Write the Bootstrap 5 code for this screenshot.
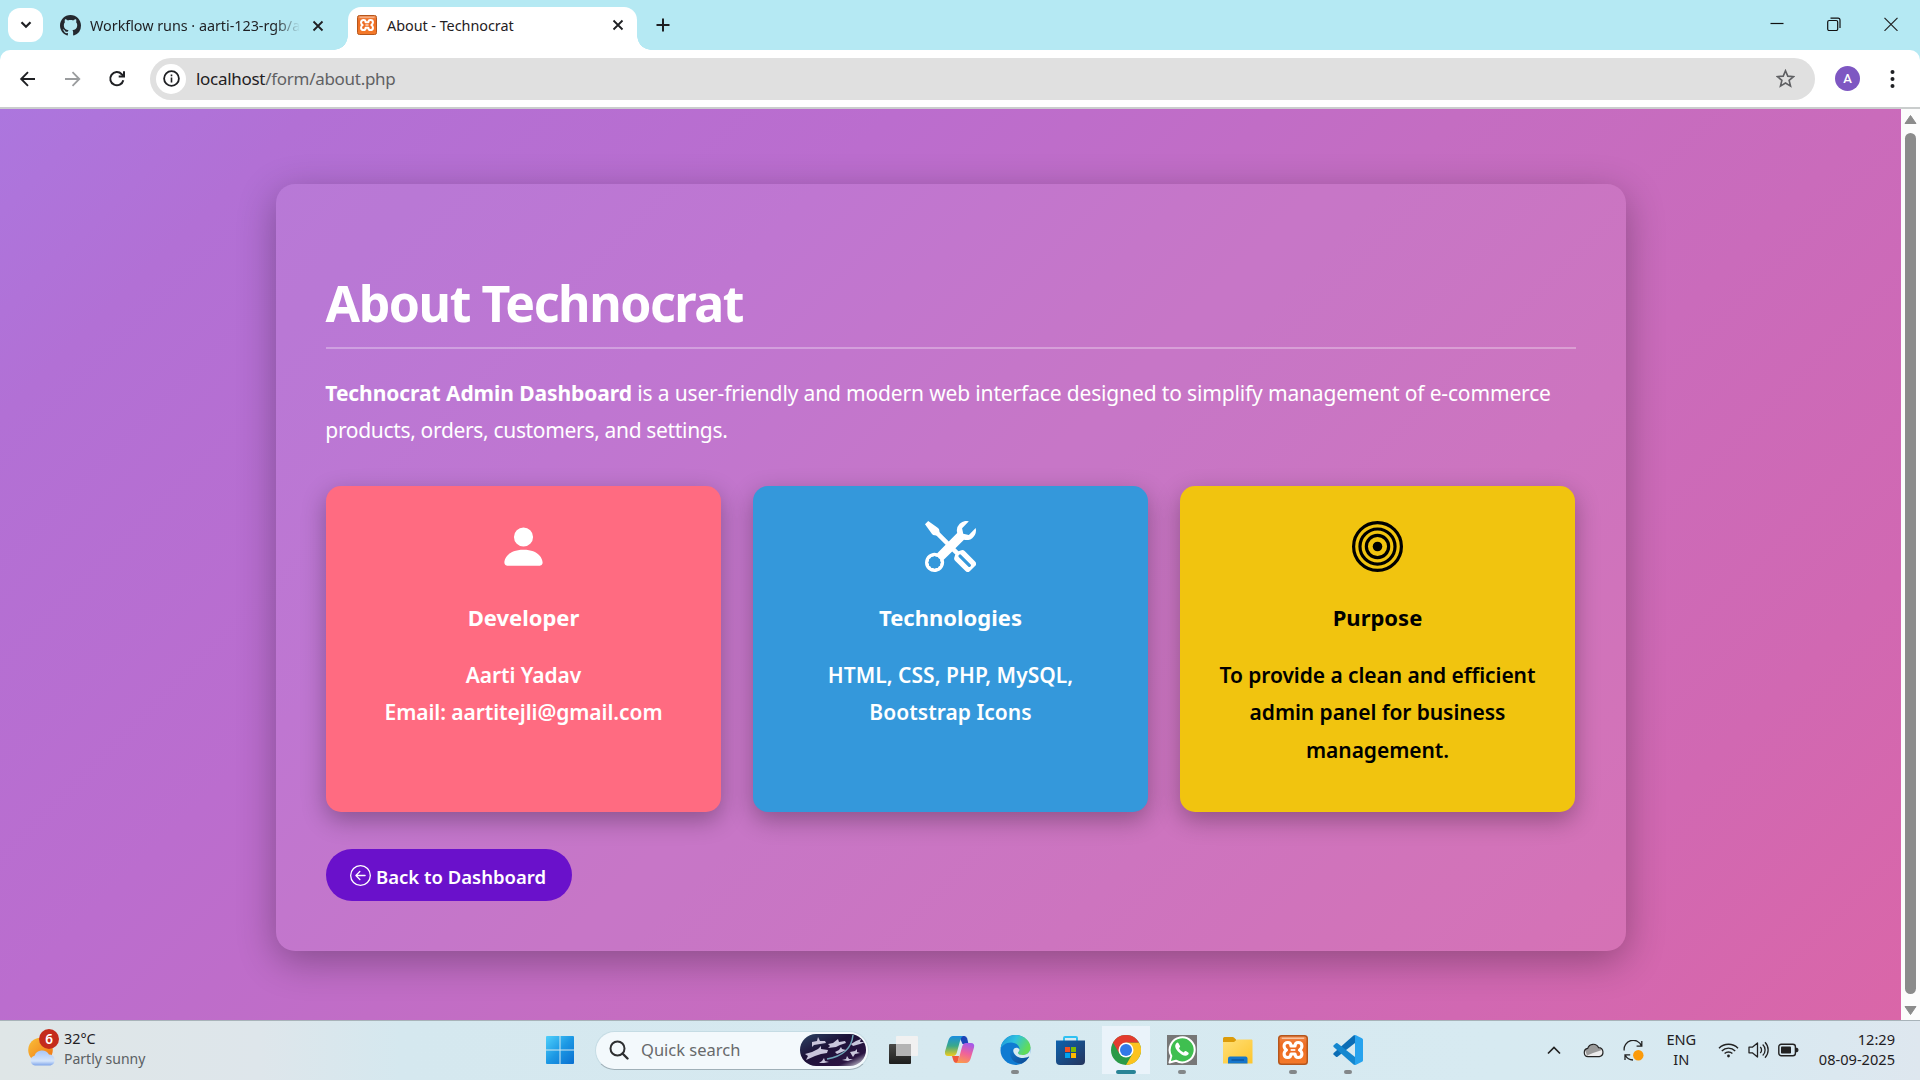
<!DOCTYPE html>
<html lang="en">
<head>
<meta charset="utf-8">
<title>About - Technocrat</title>
<link href="https://cdn.jsdelivr.net/npm/bootstrap@5.3.0/dist/css/bootstrap.min.css" rel="stylesheet">
<style>
body{width:1920px;height:1080px;overflow:hidden;font-family:"Noto Sans","Open Sans",sans-serif;color:#1f2023}
svg{display:block;flex:none}
/* browser window */
.tabstrip{height:50px;background:#b5e9f3}
.tab-menu{width:35px;height:34px;margin:8px 0 0 8px;background:#fff;border-radius:12px}
.tab-item{font-size:14.4px;letter-spacing:-.04px;white-space:nowrap;line-height:20px}
.tab-idle{width:305px;height:50px;padding:1px 0 0 17px}
.tab-idle .tab-label{width:210px;overflow:hidden;margin-left:9px;-webkit-mask-image:linear-gradient(90deg,#000 88%,transparent 100%);mask-image:linear-gradient(90deg,#000 88%,transparent 100%)}
.tab-live{width:289px;height:43px;margin-top:7px;background:#fff;border-radius:13px 13px 0 0;padding:0 13px 7px 9px;position:relative}
.tab-live .tab-label{margin-left:10px;padding-top:1px}
.tab-live::before,.tab-live::after{content:"";position:absolute;bottom:0;width:14px;height:14px}
.tab-live::before{left:-14px;background:radial-gradient(circle at 0 0,transparent 13.5px,#fff 14px)}
.tab-live::after{right:-14px;background:radial-gradient(circle at 100% 0,transparent 13.5px,#fff 14px)}
.toolbar-wrap{height:59px;background:#b5e9f3}
.toolbar-row{height:59px;background:#fff;border-radius:10px 10px 0 0;border-bottom:2px solid #cacdcd;padding:0 0 0 18px}
.omnibox{width:1665px;height:42px;background:#e0e0e0;border-radius:21px;margin-left:22px;padding:0 20px 0 6px}
.site-info{width:30px;height:30px;border-radius:50%;background:#fff}
.url-text{font-size:17px;letter-spacing:-.29px;margin-left:10px;padding-top:1px;color:#5f6063}
.url-text span{color:#1f2023}
.avatar-dot{width:25px;height:25px;border-radius:50%;background:#7e57c2;color:#fff;font:500 13px Roboto,sans-serif;margin-left:20px}
/* page */
.viewport-row{height:911px}
.page-bg{width:1901px;padding-top:75px;background:linear-gradient(135deg,#ac76de 0%,#b270d5 11%,#bb6dce 32%,#c46dc2 52%,#ca6bbb 67%,#d168b2 84%,#da66a8 100%)}
.about-panel{width:1350px;height:767px;padding:89px 50px 50px;margin-left:276px;border-radius:19px;background:rgba(255,255,255,.065);box-shadow:0 10px 38px rgba(0,0,0,.3);color:#fff}
.about-title{font-size:50px;line-height:60px;font-weight:700;letter-spacing:-1.45px;margin:0 0 25px -.5px;padding-bottom:14px;border-bottom:2px solid rgba(255,255,255,.3)}
.about-text{font-size:21px;line-height:37.4px;letter-spacing:-.15px;margin:0 0 36px -.7px;padding-top:1px}
.about-text strong{letter-spacing:-.07px}
.about-text span{letter-spacing:-.33px}
.info-row{gap:32px;width:1249px}
.info-tile{flex:1 1 0;height:326px;border-radius:15px;padding:35.5px 30px 0;text-align:center;box-shadow:0 8px 25px rgba(0,0,0,.3)}
.tile-dev{background:#ff6b81}.tile-tech{background:#3498db}.tile-goal{background:#f1c40f;color:#000}
.info-tile svg{margin:0 auto 30px}
.info-tile h2{font-size:22px;line-height:30px;font-weight:700;margin:0 0 24.500px}
.info-tile p{font-size:21px;line-height:37.4px;font-weight:560;letter-spacing:-.07px;margin:0}
.tile-tech p{letter-spacing:.04px!important}
.back-btn{width:246px;height:52px;margin-top:37px;padding:2px 0 0 24px;background:#6a11cb;color:#fff;border:0;border-radius:26px;font-size:18.5px;font-weight:620;gap:5px}
.back-btn span{padding-top:2px;white-space:nowrap}
.scroll-col{width:19px;background:#fcfcfc;padding:5px 0 4px}
.scroll-thumb{width:11px;height:861px;margin-top:-3px;background:#8b8b8b;border-radius:6px}
/* taskbar */
.taskbar{height:60px;border-top:1px solid #a8b3b9;background:linear-gradient(90deg,#dfe6e7 0,#dee6eb 260px,#d5e8ef 400px,#d7eaf1 1500px,#d8e9f1 1750px,#dee7ef 1920px);padding:0 0 1px 27px}
.weather{width:518px;font-size:14px;line-height:20px}
.weather-temp{font-size:14.4px}
.search-pill{width:274px;height:39px;margin-left:20px;border-radius:20px;background:#f3f9fc;border:1px solid #c5dce4;border-bottom-color:#9fb0b8;padding:0 1px 0 13px}
.search-text{font-size:16.5px;margin-left:12px;color:#67696b;width:159px;padding-top:1px}
.app-slot{width:55.5px;height:60px;padding-top:14px}
.app-slot.is-active{background:linear-gradient(#eaf3fa,#eaf3fa) center 5px/48px 48px no-repeat}
.app-run{width:8px;height:4px;border-radius:2px;background:#838789;margin-top:5px}
.app-run.wide{width:20px;background:#2a8496}
.tray{margin-left:auto;padding-right:25px;font-size:14.6px;line-height:20px}
.tray-text{text-align:center}
.lift{margin-top:-2px}
</style>
<script src="https://cdn.jsdelivr.net/npm/bootstrap@5.3.0/dist/js/bootstrap.bundle.min.js"></script>
</head>
<body class="d-flex flex-column m-0">
<svg width="0" height="0" class="position-absolute">
<defs>
<linearGradient id="gOr" x1="0" y1="0" x2="0" y2="1"><stop offset="0" stop-color="#f08a4e"/><stop offset=".3" stop-color="#ee6c22"/><stop offset="1" stop-color="#f47a2a"/></linearGradient>
<symbol id="xampp" viewBox="0 0 32 32"><rect x=".8" y=".8" width="30.4" height="30.4" rx="3" fill="url(#gOr)" stroke="#b5561c" stroke-width="1.6"/><path d="M4 3.5h24" stroke="#f7c3a0" stroke-width="1.6"/><path d="M10.500 8c-2.600 0-4 1.600-4 3.800 0 2 1 3.200 2.600 4.200-1.600 1-2.600 2.200-2.600 4.200 0 2.200 1.400 3.800 4 3.800 2.600 0 3.300-1.500 3.300-3.700h4.400c0 2.200.7 3.700 3.300 3.700 2.600 0 4-1.600 4-3.800 0-2-1-3.200-2.600-4.200 1.600-1 2.600-2.200 2.600-4.200 0-2.200-1.400-3.800-4-3.800-2.600 0-3.300 1.500-3.300 3.700h-4.400C13.800 9.500 13.100 8 10.500 8z" fill="#ee6c22" stroke="#fff" stroke-width="3.300" stroke-linejoin="round"/><path d="M13.500 16h5" stroke="#fff" stroke-width="1.800"/></symbol>
<symbol id="tabx" viewBox="0 0 12 12"><path d="M1.500 1.500l9 9M10.500 1.500l-9 9" stroke="#1f2023" stroke-width="1.800"/></symbol>
</defs>
</svg>

<div class="tabstrip d-flex">
  <div class="tab-menu d-flex align-items-center justify-content-center"><svg width="12" height="10" viewBox="0 0 12 10"><path d="M1.500 2.200L6 6.800l4.500-4.600" fill="none" stroke="#1f2023" stroke-width="2.200"/></svg></div>
  <div class="tab-item tab-idle d-flex align-items-center">
    <svg width="21" height="21" viewBox="0 0 16 16" fill="#24292f"><path d="M8 0C3.580 0 0 3.580 0 8c0 3.540 2.290 6.530 5.470 7.590.4.070.55-.17.55-.38 0-.19-.01-.82-.01-1.490-2.010.37-2.530-.49-2.690-.94-.09-.23-.48-.94-.82-1.130-.28-.15-.68-.52-.01-.53.63-.01 1.080.58 1.230.82.72 1.210 1.870.87 2.330.66.07-.52.28-.87.51-1.070-1.780-.2-3.640-.89-3.640-3.950 0-.87.31-1.590.82-2.150-.08-.2-.36-1.020.08-2.120 0 0 .67-.21 2.200.82.64-.18 1.320-.27 2-.27s1.360.09 2 .27c1.530-1.040 2.200-.82 2.200-.82.44 1.100.16 1.920.08 2.120.51.56.82 1.270.82 2.150 0 3.070-1.870 3.750-3.650 3.950.29.25.54.73.54 1.480 0 1.070-.01 1.930-.01 2.200 0 .21.15.46.55.38A8.010 8.010 0 0 0 16 8c0-4.420-3.580-8-8-8"/></svg>
    <div class="tab-label">Workflow runs · aarti-123-rgb/a</div>
    <svg class="ms-auto me-4" width="12" height="12"><use href="#tabx"/></svg>
  </div>
  <div class="tab-item tab-live d-flex align-items-center">
    <svg width="20" height="20"><use href="#xampp"/></svg>
    <div class="tab-label">About - Technocrat</div>
    <svg class="ms-auto" width="12" height="12"><use href="#tabx"/></svg>
  </div>
  <svg style="margin:18px 0 0 19px" width="14" height="14" viewBox="0 0 14 14"><path d="M7 .5v13M.5 7h13" stroke="#1f2023" stroke-width="2"/></svg>
  <div class="ms-auto d-flex" style="padding:17px 22px 0 0;gap:43px">
    <svg width="14" height="14" viewBox="0 0 14 14"><path d="M.5 6.500h13" stroke="#111" stroke-width="1.200"/></svg>
    <svg width="14" height="14" viewBox="0 0 14 14" fill="none" stroke="#111" stroke-width="1.200"><rect x=".7" y="3.500" width="10" height="10" rx="1.500"/><path d="M3.500 1.200h7.500a2 2 0 0 1 2 2v7.800"/></svg>
    <svg width="14" height="14" viewBox="0 0 14 14"><path d="M.5 .8l13 13M13.500 .8l-13 13" stroke="#222" stroke-width="1.200"/></svg>
  </div>
</div>
<div class="toolbar-wrap">
  <div class="toolbar-row d-flex align-items-center">
    <svg width="20" height="20" viewBox="0 0 20 20" fill="none" stroke="#1f2023" stroke-width="1.900"><path d="M17 10H3.500M10 3.200L3.200 10l6.800 6.800"/></svg>
    <svg style="margin-left:25px" width="20" height="20" viewBox="0 0 20 20" fill="none" stroke="#9a9c9e" stroke-width="1.800"><path d="M2 10h13.500M9.500 3.200L16.300 10l-6.800 6.800"/></svg>
    <svg style="margin-left:24px" width="20" height="20" viewBox="0 0 20 20" fill="none" stroke="#1f2023" stroke-width="2"><path d="M16.300 11.200A6.600 6.600 0 1 1 14.700 5.200L16.500 7"/><path d="M17 2.200v5.300h-5.300" /></svg>
    <div class="omnibox d-flex align-items-center" style="margin-left:23px">
      <div class="site-info d-flex align-items-center justify-content-center"><svg width="17" height="17" viewBox="0 0 17 17"><circle cx="8.500" cy="8.500" r="7.400" fill="none" stroke="#1f2023" stroke-width="1.800"/><path d="M8.500 7.600v4.800M8.500 4.500v1.800" stroke="#1f2023" stroke-width="1.600"/></svg></div>
      <div class="url-text"><span>localhost</span>/form/about.php</div>
      <svg class="ms-auto" width="19" height="19" viewBox="0 0 20 20"><path d="M10 1.800l2.400 5.700 6.100.5-4.700 4 1.500 6-5.300-3.200L4.700 18l1.500-6-4.700-4 6.100-.5z" fill="none" stroke="#5f6063" stroke-width="1.700"/></svg>
    </div>
    <div class="avatar-dot d-flex align-items-center justify-content-center">A</div>
    <svg style="margin-left:30px" width="5" height="20" viewBox="0 0 5 20" fill="#1f2023"><circle cx="2.500" cy="3" r="2"/><circle cx="2.500" cy="10" r="2"/><circle cx="2.500" cy="17" r="2"/></svg>
  </div>
</div>

<div class="viewport-row d-flex">
  <main class="page-bg">
    <section class="about-panel">
      <h1 class="about-title">About Technocrat</h1>
      <p class="about-text"><strong>Technocrat Admin Dashboard</strong> is a user-friendly and modern web interface designed to simplify management of e-commerce<br><span>products, orders, customers, and settings.</span></p>
      <div class="info-row d-flex">
        <div class="info-tile tile-dev">
          <svg width="51" height="51" viewBox="0 0 16 16" fill="#fff"><path d="M3 14s-1 0-1-1 1-4 6-4 6 3 6 4-1 1-1 1zm5-6a3 3 0 1 0 0-6 3 3 0 0 0 0 6"/></svg>
          <h2>Developer</h2>
          <p>Aarti Yadav<br>Email: aartitejli@gmail.com</p>
        </div>
        <div class="info-tile tile-tech">
          <svg width="51" height="51" viewBox="0 0 16 16" fill="#fff"><path d="M1 0 0 1l2.200 3.081a1 1 0 0 0 .815.419h.07a1 1 0 0 1 .708.293l2.675 2.675-2.617 2.654A3.003 3.003 0 0 0 0 13a3 3 0 1 0 5.878-.851l2.654-2.617.968.968-.305.914a1 1 0 0 0 .242 1.023l3.270 3.270a.997.997 0 0 0 1.414 0l1.586-1.586a.997.997 0 0 0 0-1.414l-3.270-3.270a1 1 0 0 0-1.023-.242L10.500 9.500l-.96-.96 2.680-2.643A3.005 3.005 0 0 0 16 3q0-.405-.102-.777l-2.140 2.141L12 4l-.364-1.757L13.777.102a3 3 0 0 0-3.675 3.680L7.462 6.460 4.793 3.793a1 1 0 0 1-.293-.707v-.071a1 1 0 0 0-.419-.814zm9.646 10.646a.5.5 0 0 1 .708 0l2.914 2.915a.5.5 0 0 1-.707.707l-2.915-2.914a.5.5 0 0 1 0-.708M3 11l.471.242.529.026.287.445.445.287.026.529L5 13l-.242.471-.026.529-.445.287-.287.445-.529.026L3 15l-.471-.242L2 14.732l-.287-.445L1.268 14l-.026-.529L1 13l.242-.471.026-.529.445-.287.287-.445.529-.026z"/></svg>
          <h2>Technologies</h2>
          <p>HTML, CSS, PHP, MySQL,<br>Bootstrap Icons</p>
        </div>
        <div class="info-tile tile-goal">
          <svg width="51" height="51" viewBox="0 0 16 16" fill="none" stroke="#000"><circle cx="8" cy="8" r="7.500"/><circle cx="8" cy="8" r="5.500"/><circle cx="8" cy="8" r="3.500"/><circle cx="8" cy="8" r="1.500" fill="#000" stroke="none"/></svg>
          <h2>Purpose</h2>
          <p>To provide a clean and efficient<br>admin panel for business<br>management.</p>
        </div>
      </div>
      <a class="btn back-btn d-flex align-items-center"><svg width="21" height="21" viewBox="0 0 16 16" fill="#fff"><path fill-rule="evenodd" d="M1 8a7 7 0 1 0 14 0A7 7 0 0 0 1 8m15 0A8 8 0 1 1 0 8a8 8 0 0 1 16 0m-4.500-.5a.5.5 0 0 1 0 1H5.707l2.147 2.146a.5.5 0 0 1-.708.708l-3-3a.5.5 0 0 1 0-.708l3-3a.5.5 0 1 1 .708.708L5.707 7.500z"/></svg><span>Back to Dashboard</span></a>
    </section>
  </main>
  <div class="scroll-col d-flex flex-column align-items-center justify-content-between">
    <svg width="13" height="11" viewBox="0 0 13 11"><path d="M6.500 1.500L12 9.500H1z" fill="#8b8b8b" stroke="#8b8b8b" stroke-linejoin="round"/></svg>
    <div class="scroll-thumb"></div>
    <svg width="13" height="11" viewBox="0 0 13 11"><path d="M6.500 9.500L12 1.500H1z" fill="#8b8b8b" stroke="#8b8b8b" stroke-linejoin="round"/></svg>
  </div>
</div>

<footer class="taskbar d-flex align-items-center">
  <div class="weather d-flex align-items-center">
    <svg style="margin-top:-7px" width="33" height="40" viewBox="0 0 33 40"><defs><linearGradient id="sun" x1="0" y1="0" x2="1" y2="1"><stop offset="0" stop-color="#f9c03a"/><stop offset="1" stop-color="#f0700f"/></linearGradient><linearGradient id="cl" x1="0" y1="0" x2="0" y2="1"><stop offset="0" stop-color="#a9c6f5"/><stop offset=".7" stop-color="#d5e5fb"/><stop offset="1" stop-color="#7fa5ea"/></linearGradient></defs><circle cx="13.500" cy="23" r="12.300" fill="url(#sun)"/><path d="M8 38.500a5 5 0 0 1-.5-9.800A8 8 0 0 1 22 27.500a5.600 5.600 0 0 1 1.500 11z" fill="url(#cl)"/><circle cx="22" cy="12" r="10" fill="#c42b1c"/><text x="22" y="17" font-size="13.500" font-weight="600" text-anchor="middle" fill="#fff">6</text></svg>
    <div class="lift" style="margin-left:4px"><div class="weather-temp">32°C</div><div style="color:#5a6063">Partly sunny</div></div>
  </div>
  <svg width="30" height="30" viewBox="0 0 30 30"><defs><linearGradient id="win" x1="0" y1="0" x2="1" y2="1"><stop offset="0" stop-color="#4fd0fb"/><stop offset=".5" stop-color="#1c98e4"/><stop offset="1" stop-color="#0a6fd0"/></linearGradient></defs><path d="M2 1h12.500v13.500H1V2q0-1 1-1zM15.500 1H28q1 0 1 1v12.500H15.500zM1 15.500h13.500V29H2q-1 0-1-1zM15.500 15.500H29V28q0 1-1 1H15.500z" fill="url(#win)"/></svg>
  <div class="search-pill d-flex align-items-center">
    <svg width="20" height="20" viewBox="0 0 20 20" fill="none" stroke="#2d2f31" stroke-width="2"><circle cx="8.500" cy="8.500" r="7"/><path d="M13.500 13.500l5 5" stroke-width="2.400" stroke-linecap="round"/></svg>
    <div class="search-text">Quick search</div>
    <svg width="66" height="33" viewBox="0 0 66 33"><defs><linearGradient id="fish" x1="0" y1="0" x2="1" y2="1"><stop offset="0" stop-color="#2d4565"/><stop offset=".4" stop-color="#1d1238"/><stop offset=".78" stop-color="#2a1442"/><stop offset="1" stop-color="#f3f9fc"/></linearGradient></defs><rect width="66" height="32" rx="16" fill="url(#fish)"/><path d="M53 1q-2 20-26 24" fill="none" stroke="#6fa5b8" stroke-width="1.500"/><g fill="#c9c6dc"><path d="M12 8l5-1 1-4 2 4 5 0 1 2-6 1-6 1-2 2z"/><path d="M5 20l7-2 6-3 3-3 0 3 7 1-1 3-6 1-6 2-9 4 2-4z"/><path d="M28 10l5-1 5-4 1 3 6-1 1 2-6 2-4 2-8 1 2-2z"/><path d="M35 18l4-2 2-3 1 2 4 1-4 2-5 2z"/><path d="M51 10l5-3 5-2-1 3 5 0-5 2-7 2z"/><path d="M50 18l5-1 2-2 0 3 3 1-5 1-2 3z"/><path d="M19 29l3-2 2-3 1 3 4 1-5 1z"/><path d="M42 26l4-1 1-3 2 3 4 0-5 2z"/></g></svg>
  </div>
  <svg style="margin:0 14px 0 19px" width="30" height="30" viewBox="0 0 30 30"><defs><linearGradient id="tvd" x1="0" y1="0" x2="0" y2="1"><stop offset="0" stop-color="#4a4a48"/><stop offset="1" stop-color="#1e1e1d"/></linearGradient></defs><rect x="1" y="9" width="22" height="20" rx="1" fill="url(#tvd)"/><rect x="8" y="1" width="22" height="20" rx="1" fill="#f1f1f1"/><path d="M8 9h15v12H8z" fill="#b4b4b4"/></svg>
  <div class="d-flex align-self-start" style="height:59px">
    <div class="app-slot d-flex flex-column align-items-center"><svg width="31" height="30" viewBox="0 0 31 30"><defs><linearGradient id="c1" x1="0" y1="0" x2="0" y2="1"><stop offset="0" stop-color="#1a8ee0"/><stop offset=".5" stop-color="#3aa98a"/><stop offset="1" stop-color="#f0cc1c"/></linearGradient><linearGradient id="c2" x1=".6" y1="0" x2=".3" y2="1"><stop offset="0" stop-color="#a65ae8"/><stop offset=".5" stop-color="#f0629a"/><stop offset="1" stop-color="#fb9a4e"/></linearGradient></defs><path d="M15 1h5.500q2 0 2.700 2.500L24.500 9h-6z" fill="#1a45b8"/><path d="M8 21h7l-1 7h-1.500q-2.500 0-3.300-3z" fill="#f0593c"/><path d="M9 1h10q-2 1-3 5l-3 11q-1 4-4 4H4Q.5 21 1 16.500L4.500 5Q6 1 9 1z" fill="url(#c1)"/><path d="M22 28H12q2-1 3-5l3-11q1-4 4-4h5q4 0 3 4.500l-3.500 11.500q-1.500 4-4.500 4z" fill="url(#c2)"/></svg></div>
    <div class="app-slot d-flex flex-column align-items-center"><svg width="31" height="30" viewBox="0 0 31 30"><defs><linearGradient id="e1" x1="0" y1="0" x2="1" y2=".4"><stop offset="0" stop-color="#1b8fd8"/><stop offset=".5" stop-color="#2fc2df"/><stop offset="1" stop-color="#62dc58"/></linearGradient><linearGradient id="e2" x1="0" y1="0" x2="1" y2="1"><stop offset="0" stop-color="#1279cf"/><stop offset="1" stop-color="#0d478f"/></linearGradient></defs><circle cx="15.500" cy="15" r="15" fill="#0f7bd2"/><path d="M.6 14A15 15 0 0 1 15.500 0c9 0 15 6.500 15 12.500 0 5-4 7.500-8 7.500-3 0-5-1-4.500-2.500 1-1 1.500-2 1.500-3.500C19.500 10 15 7.500 11 7.500 5.500 7.500 1.500 11 .6 14z" fill="url(#e1)"/><path d="M11 14c-3 7 2 15 11 14.500A15 15 0 0 0 29 22c.2-.8-.5-1-1-.7C21 25 12.500 21 13 14z" fill="url(#e2)"/><path d="M18.200 17.300c-.8 1.700 1.300 2.700 4.300 2.700 4 0 8-2.500 8-7.500v9.300l-1.800-.3C24 24.500 14.500 23 13.200 16c0-4 5-4 6.300-1.500 0 1.300-.6 2.100-1.300 2.800z" fill="#d7eaf1"/></svg><span class="app-run"></span></div>
    <div class="app-slot d-flex flex-column align-items-center"><svg width="31" height="30" viewBox="0 0 31 30"><defs><linearGradient id="s1" x1="0" y1="0" x2="1" y2="1"><stop offset="0" stop-color="#0e62ae"/><stop offset="1" stop-color="#25345c"/></linearGradient></defs><path d="M9 7V3q0-1 1-1h11q1 0 1 1v4" fill="none" stroke="#2fc1f2" stroke-width="2"/><path d="M1 5.500h29V26q0 4-4 4H5q-4 0-4-4z" fill="url(#s1)"/><path d="M10 12h5v5h-5z" fill="#f25022"/><path d="M16 12h5v5h-5z" fill="#7fba00"/><path d="M10 18h5v5h-5z" fill="#00a4ef"/><path d="M16 18h5v5h-5z" fill="#ffb900"/></svg></div>
    <div class="app-slot is-active d-flex flex-column align-items-center"><svg width="30" height="30" viewBox="0 0 48 48"><circle cx="24" cy="24" r="24" fill="#2a9a48"/><path d="M24 12h20.800A24 24 0 0 1 24 48l10.400-18z" fill="#fcc31e"/><path d="M24 12h20.800A24 24 0 0 0 3.200 12l10.400 18z" fill="#e33b2e"/><circle cx="24" cy="24" r="12" fill="#fff"/><circle cx="24" cy="24" r="9.600" fill="#3279e8"/></svg><span class="app-run wide"></span></div>
    <div class="app-slot d-flex flex-column align-items-center"><svg width="30" height="30" viewBox="0 0 30 30"><path d="M0 0h30v30H0z" fill="#777"/><path d="M2.500 27.500l1.800-6.500A12.500 12.500 0 1 1 9 25.700z" fill="#3fbf50" stroke="#fff" stroke-width="2" stroke-linejoin="round"/><path d="M11.500 8.200c-.6-1-1.300-.9-2-.2-2.800 3-.5 6.500 2.300 9.300 2.700 2.600 6.600 5 9.200 2.500.8-.9 1-1.700.2-2.300l-2.300-1.400c-1-.5-1.500.6-2.300 1.300-2-.7-3.800-2.300-4.700-4.300.9-.9 1.500-1.200 1.100-2.200z" fill="#fff"/></svg><span class="app-run"></span></div>
    <div class="app-slot d-flex flex-column align-items-center"><svg width="31" height="30" viewBox="0 0 31 30"><defs><linearGradient id="fo" x1="0" y1="0" x2="1" y2="1"><stop offset="0" stop-color="#ffdf78"/><stop offset="1" stop-color="#fdc52c"/></linearGradient></defs><path d="M1 3.500Q1 2 2.500 2h8q1 0 1.700.8L14.500 5v4H1z" fill="#dc9b0a"/><path d="M1 7h11l3-2.500h14.500q1 0 1 1V28.500H1z" fill="url(#fo)"/><path d="M6 28.500v-5q0-2 2-2h15.500q2 0 2 2v5z" fill="#1576cc"/><path d="M9.500 25h12.500" stroke="#0b4f94" stroke-width="1.200"/></svg></div>
    <div class="app-slot d-flex flex-column align-items-center"><svg width="30" height="30"><use href="#xampp"/></svg><span class="app-run"></span></div>
    <div class="app-slot d-flex flex-column align-items-center"><svg width="30" height="30" viewBox="0 0 30 30"><path d="M22 0v8L4.500 21.800q-.8.500-1.500 0l-2.300-2q-.8-.9 0-1.700L20.500.6z" fill="#0b6db5"/><path d="M22 30v-8L4.500 8.200q-.8-.5-1.500 0l-2.300 2q-.8.900 0 1.700L20.500 29.400z" fill="#1487cf"/><path d="M21 .3q1-.5 2 0l6 2.900q1 .5 1 1.500v20.600q0 1-1 1.500l-6 2.900q-1 .5-2-.1 1 0 1-1.300V1.700Q22 .6 21 .3z" fill="#27a3ee"/></svg><span class="app-run"></span></div>
  </div>
  <div class="tray d-flex align-items-center">
    <svg width="14" height="9" viewBox="0 0 14 9"><path d="M1 7.500l6-6 6 6" fill="none" stroke="#222" stroke-width="1.700"/></svg>
    <svg style="margin-left:22px" width="21" height="16" viewBox="0 0 21 16"><path d="M5 14.700a4.200 4.200 0 0 1-.3-8.300A5.800 5.800 0 0 1 15.500 5.600a4.600 4.600 0 0 1 .8 9.100z" fill="#ececec"/><path d="M2 8Q4 6 5 6.200A5.800 5.800 0 0 1 15.500 5.600L19 8 10 11l-6 2.500z" fill="#9a9a9a"/><path d="M5 14.700a4.200 4.200 0 0 1-.3-8.300A5.800 5.800 0 0 1 15.500 5.600a4.600 4.600 0 0 1 .8 9.100z" fill="none" stroke="#222" stroke-width="1.200"/></svg>
    <svg style="margin-left:19px" width="21" height="21" viewBox="0 0 21 21"><g fill="none" stroke="#222" stroke-width="1.300"><path d="M1.200 10.500A9 9 0 0 1 18.500 6M18.800 1v5.200h-5.200"/><path d="M2 20v-5.200h5.200M2.300 15.200A9 9 0 0 0 10 20"/></g><circle cx="15.300" cy="15.300" r="5.200" fill="#fb9a0a"/></svg>
    <div class="tray-text lift" style="margin:-2px 21px 0 22px;width:31px">ENG<br>IN</div>
    <svg width="21" height="16" viewBox="0 0 21 16" fill="none" stroke="#222" stroke-width="1.400"><path d="M1 6.200a13.400 13.400 0 0 1 19 0M3.800 8.900a9.500 9.500 0 0 1 13.400 0M6.600 11.600a5.600 5.600 0 0 1 7.800 0"/><circle cx="10.500" cy="14" r="1.400" fill="#222" stroke="none"/></svg>
    <svg style="margin-left:9px" width="21" height="18" viewBox="0 0 21 18" fill="none" stroke="#222" stroke-width="1.300"><path d="M1 6.200h3.300L9.500 2v14l-5.200-4.200H1z" stroke-linejoin="round"/><path d="M12.200 6a4 4 0 0 1 0 6M14.700 3.500a7.500 7.500 0 0 1 0 11M17 1.300a11 11 0 0 1 0 15.400"/></svg>
    <svg style="margin-left:9px" width="21" height="14" viewBox="0 0 21 14"><rect x=".8" y="1.300" width="16.600" height="11.400" rx="2.500" fill="none" stroke="#222" stroke-width="1.400"/><rect x="3" y="3.500" width="10" height="7" rx=".8" fill="#222"/><path d="M18.500 5q1.500 0 1.500 2t-1.500 2z" fill="#222" stroke="#222"/></svg>
    <div class="text-end" style="margin:-3px 0 0 20px">12:29<br>08-09-2025</div>
  </div>
</footer>
</body>
</html>
